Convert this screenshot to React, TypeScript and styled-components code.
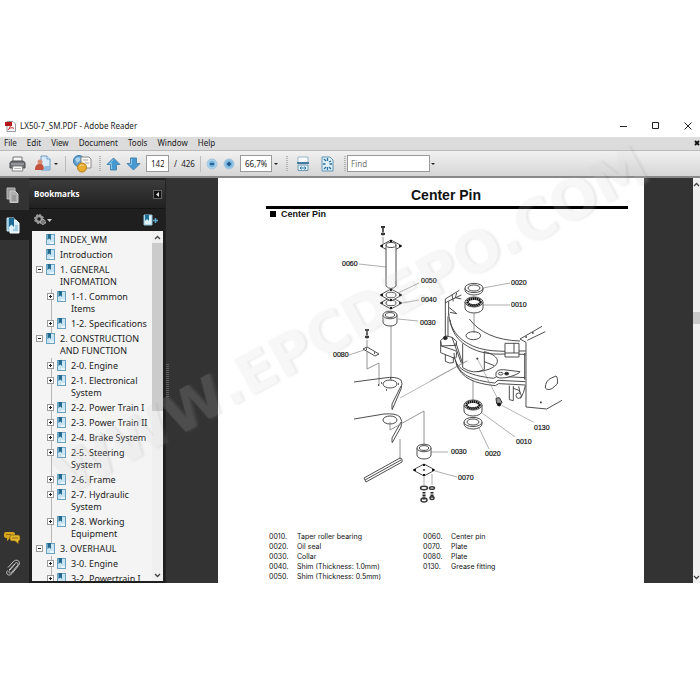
import React from "react";
import styled, { createGlobalStyle, css } from "styled-components";

const GlobalStyle = createGlobalStyle`
  *, *::before, *::after { box-sizing: border-box; }
  html, body { margin: 0; background: #fff; }
  body { font-family: "Noto Sans", "Open Sans", sans-serif; font-size: 8px; line-height: 12px; color: #222; overflow: hidden; }
  button, input { font: inherit; color: inherit; margin: 0; padding: 0; border: 0; background: none; }
  button { display: inline-flex; align-items: center; justify-content: center; }
  ul { list-style: none; margin: 0; padding: 0; }
  svg { display: block; flex: none; }
`;

const AppWindow = styled.main`
  position: relative;
  display: flex;
  flex-direction: column;
  height: calc(100vh - 234px);
  margin: 117px 0;
  overflow: hidden;
`;

const TitleBar = styled.header`
  display: flex;
  align-items: center;
  gap: 4px;
  height: 20px;
  padding: 0 4px 2px 5px;
  flex: none;
`;
const WindowTitle = styled.h1`
  flex: 1;
  margin: 0;
  font-size: 8px;
  font-weight: 400;
`;
const WindowButtons = styled.div`
  display: flex;
  gap: 16px;
`;
const WindowButton = styled.button`
  width: 16px;
  height: 16px;
`;

const MenuBar = styled.nav`
  display: flex;
  align-items: center;
  gap: 10px;
  height: 14px;
  padding: 0 0 2px 4px;
  flex: none;
  background: #dcdcdc;
  border-bottom: 1px solid #b9b9b9;
`;
const MenuButton = styled.button``;
const CloseDocument = styled.button`
  margin-left: auto;
  width: 6px;
  height: 10px;
`;

const Toolbar = styled.div`
  display: flex;
  align-items: center;
  height: 27px;
  padding-left: 9px;
  flex: none;
  background: linear-gradient(#f1f1f1, #d6d6d6);
  border-bottom: 2px solid #888;
`;
const Group = styled.div<{ $gap: number; $left?: number }>`
  display: flex;
  align-items: center;
  gap: ${(p) => p.$gap}px;
  margin-left: ${(p) => p.$left ?? 0}px;
`;
const ToolButton = styled.button`
  height: 20px;
`;
const Grip = styled.span<{ $dotted?: boolean }>`
  width: 2px;
  height: 16px;
  ${(p) =>
    p.$dotted
      ? css`background: repeating-linear-gradient(#b4b4b4 0 1px, transparent 1px 2px);`
      : css`width: 1px; background: #bcbcbc;`}
`;
const Field = styled.input<{ $width: number; $pad: number }>`
  width: ${(p) => p.$width}px;
  height: 17px;
  padding: 0 ${(p) => p.$pad}px;
  border: 1px solid #9a9a9a;
  background: #fff;
  &::placeholder { color: #777; opacity: 1; }
`;
const PageTotal = styled.span`
  width: 21px;
  white-space: pre;
`;
const Caret = styled.span`
  border: 2px solid transparent;
  border-top-color: #222;
  border-bottom: 0;
`;

const Workspace = styled.div`
  display: flex;
  flex: 1;
  min-height: 0;
  background: #333;
`;
const Rail = styled.nav`
  display: flex;
  flex-direction: column;
  width: 29px;
  flex: none;
  padding-top: 2px;
  padding-bottom: 0;
`;
const RailButton = styled.button<{ $active?: boolean }>`
  width: 100%;
  height: 30px;
  padding-right: 4px;
  background: ${(p) => (p.$active ? "#1f1f1f" : "none")};
`;
const RailSpacer = styled.div`
  flex: 1;
`;

const Panel = styled.aside`
  display: flex;
  flex-direction: column;
  width: 137px;
  flex: none;
  border-right: 1px solid #222;
  background: #1f1f1f;
`;
const PanelHeader = styled.div`
  display: flex;
  align-items: center;
  justify-content: space-between;
  height: 29px;
  margin-top: 2px;
  padding: 0 3px 0 5px;
  flex: none;
  background: linear-gradient(#3b3b3b, #212121);
  border-bottom: 1px solid #151515;
`;
const PanelTitle = styled.h2`
  margin: 0;
  font-family: "Open Sans", "Noto Sans", sans-serif;
  font-size: 8px;
  color: #fff;
`;
const Collapse = styled.button`
  width: 9px;
  height: 9px;
  border: 1px solid #666;
  background: #111;
`;
const PanelTools = styled.div`
  display: flex;
  align-items: center;
  justify-content: space-between;
  height: 22px;
  padding: 0 7px 0 5px;
  flex: none;
`;
const TreePane = styled.div`
  display: flex;
  flex: 1;
  min-height: 0;
  margin: 0 2px 2px 3px;
  background: #f4f4f4;
`;
const Tree = styled.ul`
  flex: 1;
  min-width: 0;
  overflow: hidden;
  padding-top: 3px;
`;
const TreeItem = styled.li<{ $level: number }>`
  display: flex;
  align-items: flex-start;
  position: relative;
  padding-left: ${(p) => 4 + p.$level * 11}px;
  padding-bottom: 3px;
  ${(p) =>
    p.$level > 0 &&
    css`
      &::before { content: ""; position: absolute; left: 19px; top: -2px; bottom: 0; width: 1px; background: #b5b5b5; }
    `}
`;
const Toggle = styled.button<{ $hidden?: boolean }>`
  position: relative;
  width: 7px;
  height: 7px;
  margin: 2px 3px 0 0;
  flex: none;
  visibility: ${(p) => (p.$hidden ? "hidden" : "visible")};
`;
const TreeLink = styled.a`
  display: flex;
  gap: 5px;
  color: #222;
  font-size: 9px;
  text-decoration: none;
  white-space: pre;
`;
const ScrollTrack = styled.div<{ $width: number }>`
  display: flex;
  flex-direction: column;
  align-items: center;
  width: ${(p) => p.$width}px;
  flex: none;
  background: #f0f0f0;
  overflow: hidden;
`;
const ScrollArrow = styled.button`
  height: 12px;
  flex: none;
`;
const ScrollThumb = styled.div<{ $height: number; $top: number }>`
  width: 100%;
  height: ${(p) => p.$height}px;
  margin-top: ${(p) => p.$top}px;
  background: #cbcbcb;
`;
const ScrollRest = styled.div`
  flex: 1;
`;

const Splitter = styled.div`
  display: flex;
  align-items: center;
  width: 3px;
  flex: none;
  &::before {
    content: "";
    width: 3px;
    height: 34px;
    background: repeating-linear-gradient(#5c5c5c 0 1px, transparent 1px 2px);
  }
`;
const DocumentPane = styled.section`
  flex: 1;
  min-width: 0;
  overflow: hidden;
  padding: 0 49px;
`;
const Page = styled.article`
  min-height: 100%;
  background: #fff;
  color: #111;
  font-family: "Liberation Sans", Arial, sans-serif;
`;
const PageTitle = styled.h2`
  margin: 0 16px 0 48px;
  padding: 9px 2px 3px 0;
  font-size: 14px;
  line-height: 16px;
  text-align: center;
  border-bottom: 3px solid #000;
`;
const SectionTitle = styled.h3`
  display: flex;
  align-items: center;
  gap: 5px;
  margin: 0 0 0 52px;
  font-size: 9px;
  line-height: 10px;
  &::before { content: ""; width: 6px; height: 6px; background: #000; }
`;
const Drawing = styled.svg`
  width: 100%;
  height: 311px;
`;
const Legend = styled.div`
  display: flex;
  gap: 38px;
  padding-left: 51px;
  margin-top: 2px;
`;
const PartsTable = styled.table`
  align-self: flex-start;
  border-collapse: collapse;
  font-family: Inter, "Liberation Sans", sans-serif;
  font-size: 7px;
  line-height: 10px;
  white-space: nowrap;
  td { padding: 0; }
  td:first-child { width: 28px; }
  td:last-child { min-width: 88px; }
`;

const Watermark = styled.svg`
  position: absolute;
  left: 0;
  top: 0;
  width: 700px;
  height: 466px;
  pointer-events: none;
`;
const WatermarkText = styled.text`
  font-family: "DejaVu Sans", sans-serif;
  font-weight: 700;
  font-size: 56px;
  font-kerning: none;
`;

type Bookmark = { text: string; level: number; state?: "open" | "closed" };
const bookmarks: Bookmark[] = [
  { text: "INDEX_WM", level: 0 },
  { text: "Introduction", level: 0 },
  { text: "1. GENERAL\nINFOMATION", level: 0, state: "open" },
  { text: "1-1. Common\nItems", level: 1, state: "closed" },
  { text: "1-2. Specifications", level: 1, state: "closed" },
  { text: "2. CONSTRUCTION\nAND FUNCTION", level: 0, state: "open" },
  { text: "2-0. Engine", level: 1, state: "closed" },
  { text: "2-1. Electronical\nSystem", level: 1, state: "closed" },
  { text: "2-2. Power Train I", level: 1, state: "closed" },
  { text: "2-3. Power Train II", level: 1, state: "closed" },
  { text: "2-4. Brake System", level: 1, state: "closed" },
  { text: "2-5. Steering\nSystem", level: 1, state: "closed" },
  { text: "2-6. Frame", level: 1, state: "closed" },
  { text: "2-7. Hydraulic\nSystem", level: 1, state: "closed" },
  { text: "2-8. Working\nEquipment", level: 1, state: "closed" },
  { text: "3. OVERHAUL", level: 0, state: "open" },
  { text: "3-0. Engine", level: 1, state: "closed" },
  { text: "3-2. Powertrain I", level: 1, state: "closed" },
];

const partsLeft = [
  ["0010.", "Taper roller bearing"],
  ["0020.", "Oil seal"],
  ["0030.", "Collar"],
  ["0040.", "Shim (Thickness: 1.0mm)"],
  ["0050.", "Shim (Thickness: 0.5mm)"],
];
const partsRight = [
  ["0060.", "Center pin"],
  ["0070.", "Plate"],
  ["0080.", "Plate"],
  ["0130.", "Grease fitting"],
];

const PdfIcon = () => (
  <svg width="11" height="11" viewBox="0 0 11 11">
    <path d="M2 .5h6l2.500 2.500v7.500H2z" fill="#fff" stroke="#999" />
    <path d="M0 1h7v4H0z" fill="#b5161b" />
    <path d="M3 9C5 7 6 4 5.500 3M4 7.500c2-1 4-1 5 0" fill="none" stroke="#c22" />
  </svg>
);
const BookmarkIcon = () => (
  <svg width="9" height="11" viewBox="0 0 9 11">
    <rect x=".5" y=".5" width="8" height="10" fill="#c9e4f2" stroke="#6aa3c2" />
    <path d="M4 8h4v2H4z" fill="#eaf6fc" />
    <path d="M1.500 0h3.500v6L3.300 4.600 1.500 6z" fill="#236a8e" />
  </svg>
);
const ToggleIcon = ({ closed }: { closed: boolean }) => (
  <svg width="7" height="7" viewBox="0 0 7 7">
    <rect x=".5" y=".5" width="6" height="6" fill="#fff" stroke="#9a9a9a" />
    <path d={closed ? "M2 3.500h3M3.500 2v3" : "M2 3.500h3"} stroke="#222" />
  </svg>
);
const PrinterIcon = () => (
  <svg width="17" height="16" viewBox="0 0 17 16">
    <path d="M4 1h9v5H4z" fill="#f6f6f6" stroke="#777" />
    <path d="M1 6.500 3 5h11l2 1.500V12H1z" fill="#6d6f72" stroke="#4b4d50" />
    <path d="M2 8h13" stroke="#b9bcc0" />
    <path d="M4 10h9l1 5H3z" fill="#fafafa" stroke="#888" />
    <path d="M5 12.500h7" stroke="#bbb" />
  </svg>
);
const SendIcon = () => (
  <svg width="16" height="17" viewBox="0 0 16 17">
    <path d="M6 1h6l3 3v11H6z" fill="#d6eafa" stroke="#6f9dc4" />
    <path d="M12 1v3h3" fill="#fff" stroke="#6f9dc4" />
    <circle cx="5" cy="7" r="2.500" fill="#d98a72" />
    <path d="M0 15c0-5 2-6 5-6s4 2 4 6z" fill="#c4503c" />
    <path d="M8 15l2-4h5l-1 5z" fill="#8fbbe0" />
  </svg>
);
const WebIcon = () => (
  <svg width="19" height="18" viewBox="0 0 19 18">
    <circle cx="6" cy="6" r="5.500" fill="#5f9fd0" stroke="#3d78a8" />
    <path d="M2 4q3-3 5-1T4 8" fill="#a9d2ec" />
    <path d="M8 2h8l2 2v9H8z" fill="#f7f5ef" stroke="#8b8b8b" />
    <path d="M10 5h5M12 8h4" stroke="#aaa" />
    <circle cx="9" cy="12.500" r="4.500" fill="#e9ad2e" stroke="#b97b12" />
    <path d="M6.500 11q2-2 4-.5" fill="none" stroke="#fbe094" />
  </svg>
);
const ArrowIcon = ({ down }: { down?: boolean }) => (
  <svg width="15" height="14" viewBox="0 0 15 14">
    <path
      d={down ? "M4.500 1h6v5.500h3.500L7.500 13 1 6.500h3.500z" : "M4.500 13h6V7.500h3.500L7.500 1 1 7.500h3.500z"}
      fill="#4698d0"
      stroke="#4a86b0"
    />
    <path d={down ? "M5.500 2v5.500h-2" : "M7.500 2.500 3.500 6.500h2V12"} fill="none" stroke="#8ec8ea" />
  </svg>
);
const ZoomIcon = ({ plus }: { plus?: boolean }) => (
  <svg width="12" height="12" viewBox="0 0 12 12">
    <circle cx="6" cy="6" r="5" fill={plus ? "#8fc3e6" : "#a9d2ec"} stroke="#a9c4d8" />
    <circle cx="6" cy="6" r="3" fill="#6cadd9" />
    <path d={plus ? "M4 6h4M6 4v4" : "M4 6h4"} stroke="#174f80" strokeWidth="1.500" />
  </svg>
);
const FitWidthIcon = () => (
  <svg width="12" height="16" viewBox="0 0 12 16">
    <path d="M1 1h10v6H1z" fill="#f6fafc" stroke="#9ab6c8" />
    <path d="M0 7h12" stroke="#417b9f" strokeWidth="2" />
    <path d="M1 9h10v5.500H1z" fill="#e4f1f8" stroke="#6c9ab5" />
    <path d="M3 12h6M4.500 10.500 3 12l1.500 1.500M7.500 10.500 9 12l-1.500 1.500" fill="none" stroke="#2a77a8" />
  </svg>
);
const FitPageIcon = () => (
  <svg width="13" height="16" viewBox="0 0 13 16">
    <path d="M1 1h8l3 3v11H1z" fill="#dff0f8" stroke="#6094b2" />
    <path
      d="M3 3l2 2M10 5l-2 1M3 13l2-2M10 13l-2-2M6.500 2v3M6.500 11v3M2 8h2.500M8.500 8H11"
      stroke="#2a6f9b"
      strokeWidth="1.300"
    />
  </svg>
);
const PagesIcon = () => (
  <svg width="13" height="16" viewBox="0 0 13 16">
    <path d="M1 1h8v11H1z" fill="#999" stroke="#bbb" />
    <path d="M4 4h5l3 3v8.500H4z" fill="#b0b0b0" stroke="#ccc" />
    <path d="M6 9h4M6 11h4M6 13h4" stroke="#888" />
  </svg>
);
const BookmarksIcon = () => (
  <svg width="14" height="17" viewBox="0 0 14 17">
    <path d="M1 1h7v13H1z" fill="#8fc4de" stroke="#c8e7f5" />
    <path d="M4 3h6l3 3v10H4z" fill="#d9eef8" stroke="#fff" />
    <path d="M3 1h5v9L5.500 7.500 3 10z" fill="#1c6c96" />
    <path d="M9 9h3M9 11h3M7 13h5" stroke="#69a9c8" />
  </svg>
);
const CommentsIcon = () => (
  <svg width="17" height="14" viewBox="0 0 17 14">
    <path d="M2 1h7q2 0 2 2v2q0 2-2 2H6L3 10V7Q0 7 0 5V3q0-2 2-2z" fill="#d5a51d" />
    <path
      d="M8 4h6q2 0 2 2v2q0 2-1.500 2v3L11 10H8Q6 10 6 8V6q0-2 2-2z"
      fill="#e3b62e"
      stroke="#6b5210"
      strokeWidth=".6"
    />
    <path d="M8 7h6M2 3.500h5" stroke="#8f6c10" />
  </svg>
);
const ClipIcon = () => (
  <svg width="16" height="18" viewBox="0 0 16 18">
    <path
      d="M4 11 10 4.500c2-2 4 0 2.500 2L6.500 13.500c-1.500 1.500-3.500 0-2-2L10 5M3 8.500l5-5.500c3.500-4 8.500-.5 5.500 3.500L7 14.500c-3 3.500-7 .5-4.500-3"
      fill="none"
      stroke="#c9c9c9"
    />
  </svg>
);
const GearIcon = () => (
  <svg width="13" height="12" viewBox="0 0 13 12">
    <circle cx="5" cy="5" r="3" fill="none" stroke="#999" strokeWidth="2.500" />
    <circle cx="5" cy="5" r="4.500" fill="none" stroke="#aaa" strokeDasharray="2 1.500" />
    <circle cx="9" cy="8" r="2.500" fill="#777" stroke="#bbb" strokeDasharray="2 1" />
  </svg>
);
const NewBookmarkIcon = () => (
  <svg width="15" height="12" viewBox="0 0 15 12">
    <path d="M1 1h8v10H1z" fill="#def2fa" stroke="#8dc4dd" />
    <path d="M2 1h4v6L4 5 2 7z" fill="#1e7298" />
    <path d="M12.500 4v5M10 6.500h5" stroke="#5fabd0" strokeWidth="1.500" />
  </svg>
);
const Chevron = ({ down }: { down?: boolean }) => (
  <svg width="7" height="5" viewBox="0 0 7 5">
    <path d={down ? "M1 1l2.500 2.500L6 1" : "M1 4l2.500-2.500L6 4"} fill="none" stroke="#444" strokeWidth="1.300" />
  </svg>
);

const callouts: [string, number, number][] = [
  ["0060", 342, 268],
  ["0050", 421, 285],
  ["0040", 421, 304],
  ["0030", 420, 327],
  ["0080", 333, 359],
  ["0020", 511, 287],
  ["0010", 511, 309],
  ["0130", 534, 432],
  ["0010", 516, 446],
  ["0020", 485, 458],
  ["0030", 451, 456],
  ["0070", 458, 482],
];

const Bearing = ({ x, y }: { x: number; y: number }) => (
  <g>
    <path d={`M${x - 9} ${y}v6a9 5 0 0 0 18 0v-6`} fill="#fff" />
    <ellipse cx={x} cy={y} rx="9" ry="5" fill="#fff" />
    <ellipse cx={x} cy={y} rx="6.500" ry="3.400" strokeWidth="2.600" stroke="#111" strokeDasharray="1.600 .4" />
  </g>
);
const Seal = ({ x, y }: { x: number; y: number }) => (
  <g>
    <path d={`M${x - 9} ${y}v2a9 5 0 0 0 18 0v-2`} fill="#fff" />
    <ellipse cx={x} cy={y} rx="9" ry="4.600" fill="#fff" />
    <ellipse cx={x} cy={y} rx="6" ry="3" />
  </g>
);
const Collar = ({ x, y }: { x: number; y: number }) => (
  <g>
    <path d={`M${x - 7} ${y}v7a7 4 0 0 0 14 0v-7`} fill="#fff" />
    <ellipse cx={x} cy={y} rx="7" ry="3.800" fill="#fff" />
    <ellipse cx={x} cy={y} rx="4.600" ry="2.400" />
  </g>
);
const Flange = ({ x, y, hole }: { x: number; y: number; hole: number }) => (
  <g>
    <path d={`M${x - 11} ${y}L${x} ${y - 6}L${x + 11} ${y}L${x} ${y + 6}Z`} fill="#fff" />
    <ellipse cx={x} cy={y} rx={hole} ry={hole * 0.55} />
    <path
      d={`M${x - 10} ${y}h2M${x + 8} ${y}h2M${x - 1} ${y - 5}h2M${x - 1} ${y + 5}h2`}
      strokeWidth="2"
      stroke="#111"
    />
  </g>
);
const SmallBolt = ({ x, y }: { x: number; y: number }) => (
  <g>
    <path d={`M${x - 2} ${y}h4`} strokeWidth="1.800" stroke="#222" />
    <path d={`M${x} ${y}v5`} strokeWidth="1.600" stroke="#333" />
    <ellipse cx={x} cy={y + 7} rx="1.500" ry=".8" strokeWidth="1.300" stroke="#222" />
  </g>
);

const CenterPinDrawing = () => (
  <Drawing viewBox="218 221 426 311" role="img" aria-label="Exploded view of the center pin">
    <g fill="none" stroke="#3a3a3a" strokeWidth=".9" strokeLinejoin="round">
      <SmallBolt x={383} y={229} />
      <path d="M383 239v8M391 327v56" stroke="#888" />
      <Flange x={391} y={248} hole={5} />
      <path d="M386 249v39q5 5 10 0v-39" fill="#fff" />
      <ellipse cx="391" cy="247" rx="5" ry="2.500" fill="#fff" />
      <Flange x={391} y={305} hole={5} />
      <Flange x={391} y={297} hole={5} />
      <Collar x={390} y={317} />
      <path
        d="M359 266l27 3M419 285l-21 10M419 302l-17 3M418 323l-20-2M349 357l15-5"
        stroke="#777"
        strokeWidth=".6"
      />

      <SmallBolt x={367} y={332} />
      <path d="M363 351l4-2 12 7-4 2z" fill="#fff" />
      <path d="M366 351h1M374 355h1" strokeWidth="1.500" />
      <path d="M367 342v7M367 353v18l12-6v23" stroke="#888" />

      <path d="M354 384l30-4q12-2 17 2q2 3 0 9l-9 21M401 388l-9 18v5" />
      <ellipse cx="390" cy="386" rx="7" ry="4" />
      <path d="M378 387h1M398 386h1M386 392h1M390 380h1M381 385h1" strokeWidth="1.500" />
      <path d="M400 400l67-37" stroke="#888" strokeWidth=".6" />
      <path d="M354 421l30-5q12-1 16 3q3 4 1 10l-9 16M401 424l-9 16v4" />
      <ellipse cx="390" cy="422" rx="7" ry="4" />
      <path d="M390 424v8l34-19v36M400 441v20" stroke="#888" />
      <path d="M364 480l36-20 2 1v3l-36 20zM365 482l36-20" />

      <Collar x={424} y={450} />
      <Flange x={424} y={472} hole={1} />
      <path d="M431 454h17M435 473l22 6M424 479v8M432 476v11" stroke="#777" strokeWidth=".6" />
      <ellipse cx="424" cy="490" rx="3.500" ry="1.700" strokeWidth="1.500" />
      <ellipse cx="432" cy="490" rx="2.500" ry="1.300" strokeWidth="1.500" />
      <path d="M424 494v8M432 494v6" stroke="#222" strokeWidth="3" strokeDasharray="1 .5" />
      <ellipse cx="424" cy="502" rx="3" ry="2" strokeWidth="1.500" />
      <ellipse cx="432" cy="500" rx="2" ry="1.500" strokeWidth="1.500" />

      <Seal x={474} y={290} />
      <Bearing x={474} y={304} />
      <path d="M483 290l27-5M483 307h27" stroke="#777" strokeWidth=".6" />
      <path d="M474 315v20M473 383v20" stroke="#888" />

      <g transform="translate(430 275) scale(.3333)" strokeWidth="2.700">
        <path d="M46 190V78l42-26M56 85v42M56 84l38-18M46 90l10-6M66 65l4 20M80 60l-4 14 18 4M58 104l22 18-20-4M54 130v60" />
        <path d="M56 122c4 50 34 86 92 104 28 8 50 8 77 9M60 140c6 44 32 78 90 96 28 8 50 8 76 7M118 138c30 40 80 64 152 66" />
        <ellipse cx="130" cy="188" rx="22" ry="12" />
        <path d="M32 202l16-13 18 4 14 12-2 12-44 2zM32 205v34l44 18M34 219l42 14q6 2 2 22M46 245v20q12 8 24 4v-16M66 193l28 78M78 210l20 62" />
        <ellipse cx="46" cy="195" rx="6" ry="5" fill="#222" />
        <path d="M72 240c2 50 40 66 118 76l12-6 84 4M76 260c10 46 50 62 118 70l10-8 82 4M78 272c16 44 56 60 118 66l10-6 80 4" />
        <path d="M98 212v72q32 22 65 6v-54M163 236c60 14 50 54-22 60M163 266l30 12" />
        <circle cx="142" cy="257" r="2" fill="#222" />
        <path d="M142 257l60 118M112 263L0 324" stroke="#888" strokeWidth="1.800" />
        <path d="M198 300q2-10 22-10l50 6q-2 8-42 18-26 4-30-6z" fill="#fff" />
        <ellipse cx="212" cy="302" rx="7" ry="4" />
        <ellipse cx="230" cy="302" rx="6" ry="4" fill="#222" />
        <path d="M225 211h42v41h-42zM225 240h42M252 211v29M267 234h20M267 244h20" />
        <path d="M288 402V208l-18-10 66-38M292 202l54-26M288 402l62 6 46-26M284 240v80" />
        <path d="M346 345q0-22 18-30l14-6q6 4 4 24l-16 14q-14 6-20-2z" />
        <path d="M286 192h5M306 180h5M330 388h5" strokeWidth="5" />
        <path d="M238 338v42l12 3v-44M266 340l4 18M286 338q-4 22-14 38M250 346q20 4 22 14" />
        <circle cx="266" cy="368" r="8" />
        <path d="M198 376l10-2 8 14-8 12-8-8z" fill="#999" stroke="#222" />
        <path d="M202 394h10" stroke="#111" strokeWidth="9" />
        <path d="M215 397l96 51" stroke="#888" strokeWidth="1.800" />
      </g>
      <Bearing x={473} y={407} />
      <Seal x={473} y={424} />
      <path d="M482 415l33 24M479 430l10 21" stroke="#777" strokeWidth=".6" />
    </g>
    <g fontFamily="'Liberation Sans', Arial, sans-serif" fontSize="7" fill="#111" stroke="#111" strokeWidth=".2">
      {callouts.map(([label, x, y]) => (
        <text key={`${label}-${x}-${y}`} x={x} y={y}>
          {label}
        </text>
      ))}
    </g>
  </Drawing>
);

const Parts = ({ rows }: { rows: string[][] }) => (
  <PartsTable>
    <tbody>
      {rows.map(([code, name]) => (
        <tr key={code}>
          <td>{code}</td>
          <td>{name}</td>
        </tr>
      ))}
    </tbody>
  </PartsTable>
);

export default function App() {
  return (
    <>
      <GlobalStyle />
      <AppWindow>
        <TitleBar>
          <PdfIcon />
          <WindowTitle>LX50-7_SM.PDF - Adobe Reader</WindowTitle>
          <WindowButtons>
            <WindowButton aria-label="Minimize">
              <svg width="8" height="8" viewBox="0 0 8 8"><path d="M0 4.500h7" stroke="#222" /></svg>
            </WindowButton>
            <WindowButton aria-label="Maximize">
              <svg width="8" height="8" viewBox="0 0 8 8"><path d="M.5.5h6v6h-6z" fill="none" stroke="#222" /></svg>
            </WindowButton>
            <WindowButton aria-label="Close">
              <svg width="8" height="8" viewBox="0 0 8 8"><path d="M.5.5l7 7M7.500.5l-7 7" stroke="#222" /></svg>
            </WindowButton>
          </WindowButtons>
        </TitleBar>

        <MenuBar aria-label="Main menu">
          {["File", "Edit", "View", "Document", "Tools", "Window", "Help"].map((name) => (
            <MenuButton key={name}>{name}</MenuButton>
          ))}
          <CloseDocument aria-label="Close document">
            <svg width="6" height="6" viewBox="0 0 6 6"><path d="M1 1l4 4M5 1L1 5" stroke="#111" strokeWidth="1.800" /></svg>
          </CloseDocument>
        </MenuBar>

        <Toolbar>
          <Group $gap={9}>
            <ToolButton aria-label="Print"><PrinterIcon /></ToolButton>
            <Group $gap={3}>
              <ToolButton aria-label="Send"><SendIcon /></ToolButton>
              <Caret />
            </Group>
          </Group>
          <Group $gap={7} $left={7}>
            <Grip />
            <ToolButton aria-label="Create online"><WebIcon /></ToolButton>
            <Grip $dotted />
          </Group>
          <Group $gap={5} $left={5}>
            <ToolButton aria-label="Previous page"><ArrowIcon /></ToolButton>
            <ToolButton aria-label="Next page"><ArrowIcon down /></ToolButton>
            <Field $width={23} $pad={4} defaultValue="142" aria-label="Page number" />
            <PageTotal>/  426</PageTotal>
          </Group>
          <Group $gap={5} $left={5}>
            <Grip />
            <ToolButton aria-label="Zoom out"><ZoomIcon /></ToolButton>
            <ToolButton aria-label="Zoom in"><ZoomIcon plus /></ToolButton>
            <Group $gap={2}>
              <Field $width={32} $pad={4} defaultValue="66,7%" aria-label="Zoom" />
              <Caret />
            </Group>
          </Group>
          <Group $gap={9} $left={8}>
            <Grip $dotted />
            <ToolButton aria-label="Fit width"><FitWidthIcon /></ToolButton>
          </Group>
          <Group $gap={10} $left={12}>
            <ToolButton aria-label="Fit page"><FitPageIcon /></ToolButton>
            <Grip $dotted />
          </Group>
          <Group $gap={1} $left={1}>
            <Field $width={83} $pad={3} placeholder="Find" aria-label="Find" />
            <Caret />
          </Group>
        </Toolbar>

        <Workspace>
          <Rail aria-label="Panels">
            <RailButton aria-label="Pages"><PagesIcon /></RailButton>
            <RailButton $active aria-label="Bookmarks"><BookmarksIcon /></RailButton>
            <RailSpacer />
            <RailButton aria-label="Comments"><CommentsIcon /></RailButton>
            <RailButton aria-label="Attachments"><ClipIcon /></RailButton>
          </Rail>

          <Panel>
            <PanelHeader>
              <PanelTitle>Bookmarks</PanelTitle>
              <Collapse aria-label="Collapse panel">
                <svg width="4" height="5" viewBox="0 0 4 5"><path d="M3 0v5L0 2.500z" fill="#ddd" /></svg>
              </Collapse>
            </PanelHeader>
            <PanelTools>
              <ToolButton aria-label="Options">
                <GearIcon />
                <svg width="5" height="3" viewBox="0 0 5 3"><path d="M0 0h5L2.500 3z" fill="#ccc" /></svg>
              </ToolButton>
              <ToolButton aria-label="New bookmark"><NewBookmarkIcon /></ToolButton>
            </PanelTools>
            <TreePane>
              <Tree>
                {bookmarks.map((item) => (
                  <TreeItem key={item.text} $level={item.level}>
                    <Toggle $hidden={!item.state} aria-label={`Toggle ${item.text}`}>
                      <ToggleIcon closed={item.state === "closed"} />
                    </Toggle>
                    <TreeLink href="#">
                      <BookmarkIcon />
                      {item.text}
                    </TreeLink>
                  </TreeItem>
                ))}
              </Tree>
              <ScrollTrack $width={11}>
                <ScrollArrow aria-label="Scroll up"><Chevron /></ScrollArrow>
                <ScrollThumb $height={168} $top={0} />
                <ScrollRest />
                <ScrollArrow aria-label="Scroll down"><Chevron down /></ScrollArrow>
              </ScrollTrack>
            </TreePane>
          </Panel>

          <Splitter />
          <DocumentPane>
            <Page>
              <PageTitle>Center Pin</PageTitle>
              <SectionTitle>Center Pin</SectionTitle>
              <CenterPinDrawing />
              <Legend>
                <Parts rows={partsLeft} />
                <Parts rows={partsRight} />
              </Legend>
            </Page>
          </DocumentPane>

          <ScrollTrack $width={7}>
            <ScrollArrow aria-label="Page up"><Chevron /></ScrollArrow>
            <ScrollThumb $height={12} $top={122} />
            <ScrollRest />
            <ScrollArrow aria-label="Page down"><Chevron down /></ScrollArrow>
          </ScrollTrack>
        </Workspace>

        <Watermark viewBox="0 117 700 466" aria-hidden="true">
          <defs>
            <filter id="emboss" x="-5%" y="-20%" width="110%" height="140%" colorInterpolationFilters="sRGB">
              <feFlood floodColor="#cccccc" floodOpacity=".17" result="tint" />
              <feComposite in="tint" in2="SourceAlpha" operator="in" result="face" />
              <feGaussianBlur in="SourceAlpha" stdDeviation="1.200" result="soft" />
              <feOffset in="soft" dx="2" dy="1" result="moved" />
              <feFlood floodColor="#8c8c8c" floodOpacity=".2" result="dark" />
              <feComposite in="dark" in2="moved" operator="in" result="shade" />
              <feComposite in="shade" in2="SourceAlpha" operator="out" result="edge" />
              <feMerge>
                <feMergeNode in="edge" />
                <feMergeNode in="face" />
              </feMerge>
            </filter>
          </defs>
          <WatermarkText transform="translate(67 496) rotate(-28.500)" filter="url(#emboss)">
            WWW.EPCDEPO.COM
          </WatermarkText>
        </Watermark>
      </AppWindow>
    </>
  );
}
